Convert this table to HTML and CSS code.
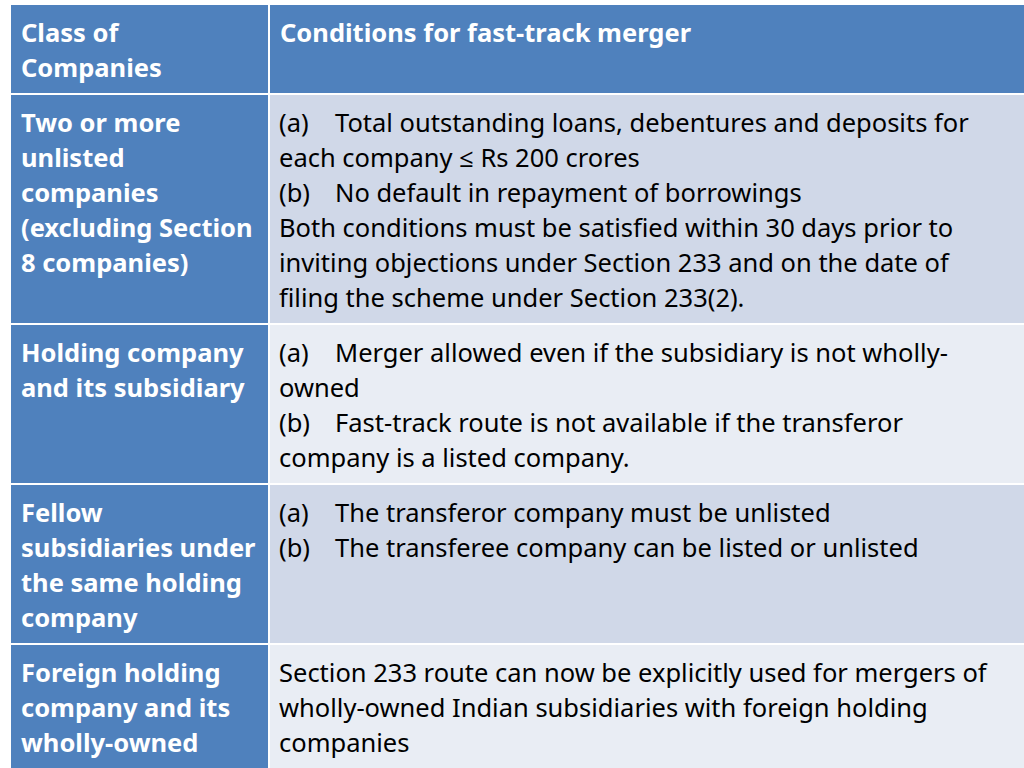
FILE: index.html
```html
<!DOCTYPE html>
<html>
<head>
<meta charset="utf-8">
<link rel="stylesheet" href="styles.css">
</head>
<body>
<div class="table">
  <div class="cell head">Class of<br>Companies</div>
  <div class="cell head">Conditions for fast-track merger</div>

  <div class="cell side">Two or more unlisted companies (excluding Section 8 companies)</div>
  <div class="cell body odd">
    <span class="lbl">(a)</span>Total outstanding loans, debentures and deposits for each company ≤ Rs 200 crores<br>
    <span class="lbl">(b)</span>No default in repayment of borrowings<br>
    Both conditions must be satisfied within 30 days prior to inviting objections under Section 233 and on the date of filing the scheme under Section 233(2).
  </div>

  <div class="cell side">Holding company and its subsidiary</div>
  <div class="cell body even">
    <span class="lbl">(a)</span>Merger allowed even if the subsidiary is not wholly-owned<br>
    <span class="lbl">(b)</span>Fast-track route is not available if the transferor company is a listed company.
  </div>

  <div class="cell side">Fellow subsidiaries under the same holding company</div>
  <div class="cell body odd">
    <span class="lbl">(a)</span>The transferor company must be unlisted<br>
    <span class="lbl">(b)</span>The transferee company can be listed or unlisted
  </div>

  <div class="cell side">Foreign holding company and its wholly-owned Indian subsidiary</div>
  <div class="cell body even">
    Section 233 route can now be explicitly used for mergers of wholly-owned Indian subsidiaries with foreign holding companies
  </div>
</div>
</body>
</html>
```
FILE: styles.css
```css
html, body {
  margin: 0;
  padding: 0;
  background: #ffffff;
  overflow: hidden;
}
body {
  width: 1024px;
  height: 768px;
  font-family: "Noto Sans", "Open Sans", sans-serif;
  font-size: 25.5px;
  line-height: 35px;
}
.table {
  display: grid;
  grid-template-columns: 257px 760px;
  column-gap: 2px;
  row-gap: 2px;
  margin: 5px 0 0 11px;
}
.cell {
  padding: 10px 10px 8px 10px;
}
.head {
  background: #4f81bd;
  color: #ffffff;
  font-weight: 700;
}
.side {
  background: #4f81bd;
  color: #ffffff;
  font-weight: 700;
}
.body {
  color: #000000;
  padding-left: 9px;
  padding-right: 30px;
}
.odd { background: #d0d8e8; }
.even { background: #e9edf4; }
.lbl {
  display: inline-block;
  width: 56px;
}
```
